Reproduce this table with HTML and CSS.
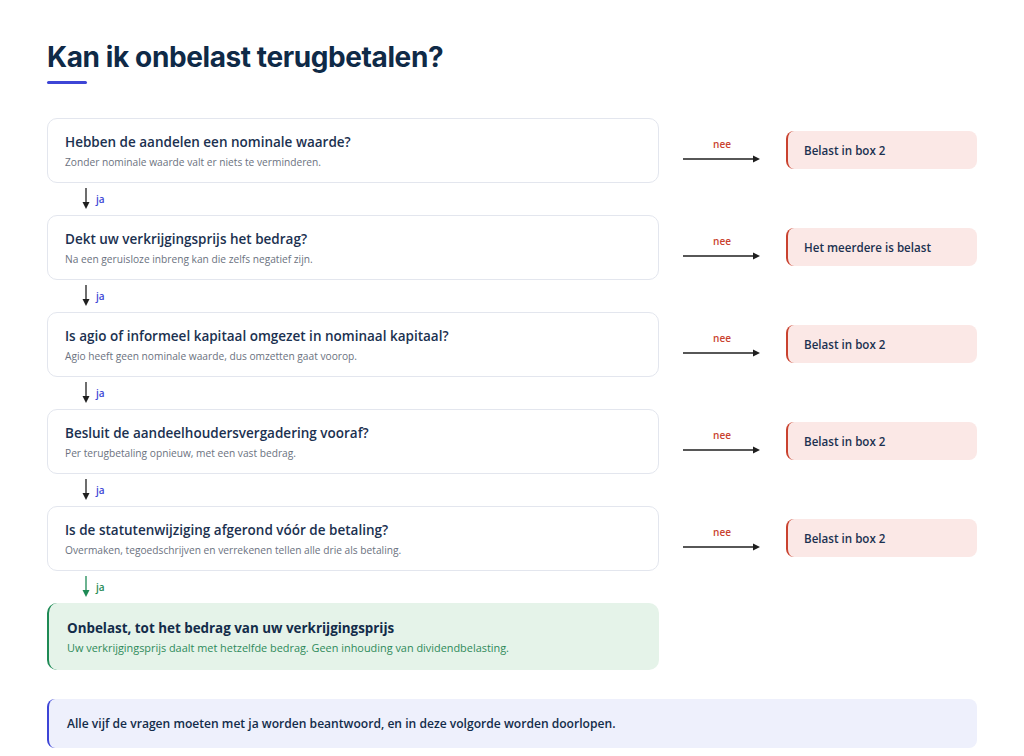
FILE: index.html
```html
<!DOCTYPE html>
<html lang="nl">
<head>
<meta charset="utf-8">
<link rel="stylesheet" href="styles.css">
</head>
<body>
<main class="page">
  <h1 class="title">Kan ik onbelast terugbetalen?</h1>
  <div class="title-bar"></div>

  <div class="flow">
    <div class="row">
      <div class="card">
        <div class="q">Hebben de aandelen een nominale waarde?</div>
        <div class="sub">Zonder nominale waarde valt er niets te verminderen.</div>
      </div>
      <div class="no"><span class="no-label">nee</span><svg class="no-arrow" width="78" height="8" viewBox="0 0 78 8"><line x1="0" y1="4" x2="70" y2="4" stroke="#1f1f1f" stroke-width="1.3"/><path d="M70 0.5 L77 4 L70 7.5 Z" fill="#1f1f1f"/></svg></div>
      <div class="outcome">Belast in box 2</div>
    </div>
    <div class="yes"><svg width="8" height="22" viewBox="0 0 8 22"><line x1="4" y1="0" x2="4" y2="15" stroke="#1f1f1f" stroke-width="1.3"/><path d="M0.5 14 L4 21 L7.5 14 Z" fill="#1f1f1f"/></svg><span class="yes-label">ja</span></div>

    <div class="row">
      <div class="card">
        <div class="q">Dekt uw verkrijgingsprijs het bedrag?</div>
        <div class="sub">Na een geruisloze inbreng kan die zelfs negatief zijn.</div>
      </div>
      <div class="no"><span class="no-label">nee</span><svg class="no-arrow" width="78" height="8" viewBox="0 0 78 8"><line x1="0" y1="4" x2="70" y2="4" stroke="#1f1f1f" stroke-width="1.3"/><path d="M70 0.5 L77 4 L70 7.5 Z" fill="#1f1f1f"/></svg></div>
      <div class="outcome">Het meerdere is belast</div>
    </div>
    <div class="yes"><svg width="8" height="22" viewBox="0 0 8 22"><line x1="4" y1="0" x2="4" y2="15" stroke="#1f1f1f" stroke-width="1.3"/><path d="M0.5 14 L4 21 L7.5 14 Z" fill="#1f1f1f"/></svg><span class="yes-label">ja</span></div>

    <div class="row">
      <div class="card">
        <div class="q">Is agio of informeel kapitaal omgezet in nominaal kapitaal?</div>
        <div class="sub">Agio heeft geen nominale waarde, dus omzetten gaat voorop.</div>
      </div>
      <div class="no"><span class="no-label">nee</span><svg class="no-arrow" width="78" height="8" viewBox="0 0 78 8"><line x1="0" y1="4" x2="70" y2="4" stroke="#1f1f1f" stroke-width="1.3"/><path d="M70 0.5 L77 4 L70 7.5 Z" fill="#1f1f1f"/></svg></div>
      <div class="outcome">Belast in box 2</div>
    </div>
    <div class="yes"><svg width="8" height="22" viewBox="0 0 8 22"><line x1="4" y1="0" x2="4" y2="15" stroke="#1f1f1f" stroke-width="1.3"/><path d="M0.5 14 L4 21 L7.5 14 Z" fill="#1f1f1f"/></svg><span class="yes-label">ja</span></div>

    <div class="row">
      <div class="card">
        <div class="q">Besluit de aandeelhoudersvergadering vooraf?</div>
        <div class="sub">Per terugbetaling opnieuw, met een vast bedrag.</div>
      </div>
      <div class="no"><span class="no-label">nee</span><svg class="no-arrow" width="78" height="8" viewBox="0 0 78 8"><line x1="0" y1="4" x2="70" y2="4" stroke="#1f1f1f" stroke-width="1.3"/><path d="M70 0.5 L77 4 L70 7.5 Z" fill="#1f1f1f"/></svg></div>
      <div class="outcome">Belast in box 2</div>
    </div>
    <div class="yes"><svg width="8" height="22" viewBox="0 0 8 22"><line x1="4" y1="0" x2="4" y2="15" stroke="#1f1f1f" stroke-width="1.3"/><path d="M0.5 14 L4 21 L7.5 14 Z" fill="#1f1f1f"/></svg><span class="yes-label">ja</span></div>

    <div class="row">
      <div class="card">
        <div class="q">Is de statutenwijziging afgerond vóór de betaling?</div>
        <div class="sub">Overmaken, tegoedschrijven en verrekenen tellen alle drie als betaling.</div>
      </div>
      <div class="no"><span class="no-label">nee</span><svg class="no-arrow" width="78" height="8" viewBox="0 0 78 8"><line x1="0" y1="4" x2="70" y2="4" stroke="#1f1f1f" stroke-width="1.3"/><path d="M70 0.5 L77 4 L70 7.5 Z" fill="#1f1f1f"/></svg></div>
      <div class="outcome">Belast in box 2</div>
    </div>
    <div class="yes yes-final"><svg width="8" height="22" viewBox="0 0 8 22"><line x1="4" y1="0" x2="4" y2="15" stroke="#1e8a55" stroke-width="1.3"/><path d="M0.5 14 L4 21 L7.5 14 Z" fill="#1e8a55"/></svg><span class="yes-label">ja</span></div>

    <div class="row">
      <div class="card card-ok">
        <div class="q q-ok">Onbelast, tot het bedrag van uw verkrijgingsprijs</div>
        <div class="sub sub-ok">Uw verkrijgingsprijs daalt met hetzelfde bedrag. Geen inhouding van dividendbelasting.</div>
      </div>
    </div>
  </div>

  <div class="note">Alle vijf de vragen moeten met ja worden beantwoord, en in deze volgorde worden doorlopen.</div>
</main>
</body>
</html>
```

FILE: styles.css
```css
* { box-sizing: border-box; }
html, body { margin: 0; padding: 0; background: #ffffff; }
body { font-family: "Open Sans", "Noto Sans", sans-serif; color: #1b3150; }

.page { width: 930px; margin-left: 47px; padding-top: 40px; }

.title {
  margin: 0;
  font-family: Inter, "Liberation Sans", sans-serif;
  font-weight: 700;
  font-size: 28px;
  line-height: 34px;
  letter-spacing: -0.4px;
  color: #0f2a47;
}
.title-bar { width: 40px; height: 3px; background: #3d45d6; border-radius: 2px; margin-top: 7px; }

.flow { margin-top: 34px; }

.row { display: grid; grid-template-columns: 612px 127px 191px; align-items: center; }

.card {
  height: 65px;
  border: 1px solid #e3e6ee;
  border-radius: 10px;
  padding: 13px 17px 0;
  background: #fff;
}
.q { font-size: 13.5px; font-weight: 600; color: #1b3150; line-height: 20px; }
.sub { font-size: 10.2px; color: #6b7280; line-height: 16px; margin-top: 2px; }

.no { display: flex; flex-direction: column; align-items: center; padding-left: 25px; padding-right: 26px; margin-top: -2px; }
.no-label { font-size: 10px; font-weight: 600; color: #c9422f; line-height: 14px; }
.no-arrow { display: block; margin-top: 4px; }

.outcome {
  height: 38px;
  margin-top: -1px;
  background: #fbe8e6;
  border-left: 2px solid #c9422f;
  border-radius: 8px;
  padding-left: 16px;
  display: flex;
  align-items: center;
  font-size: 11.6px;
  font-weight: 600;
  color: #1b3150;
}

.yes { height: 32px; display: flex; align-items: center; gap: 6px; padding-left: 35px; }
.yes svg { display: block; }
.yes-label { font-size: 10px; font-weight: 600; color: #3d45d6; }
.yes-final .yes-label { color: #1e8a55; }

.card-ok {
  height: 67px;
  background: #e5f3e9;
  border: none;
  border-left: 2px solid #1e8a55;
  padding-top: 15px;
  padding-left: 18px;
}
.q-ok { font-size: 13.4px; font-weight: 700; color: #132c4a; }
.sub-ok { font-size: 10.9px; color: #2e8a5a; }

.note {
  margin-top: 29px;
  height: 49px;
  background: #eef0fc;
  border-left: 2px solid #3d45d6;
  border-radius: 8px;
  padding-left: 18px;
  display: flex;
  align-items: center;
  font-size: 12.1px;
  font-weight: 600;
  color: #132c4a;
}
```
